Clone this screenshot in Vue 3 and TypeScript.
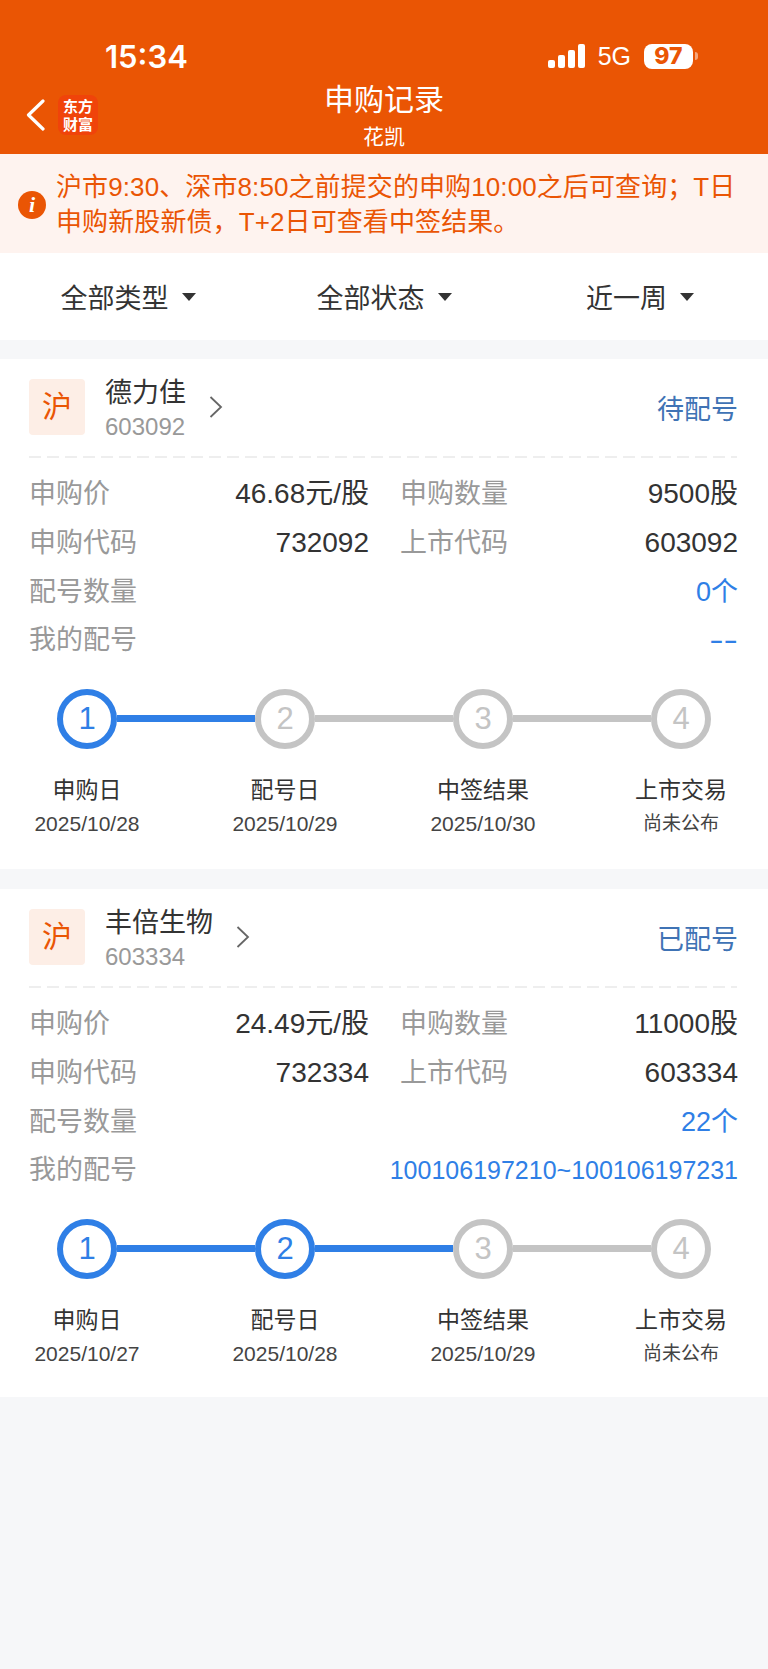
<template>
  <div class="page">
    <header class="header">
      <div class="status">
        <span class="time">15:34</span>
        <div class="status-right">
          <div class="signal"><i class="b1"></i><i class="b2"></i><i class="b3"></i><i class="b4"></i></div>
          <span class="net">5G</span>
          <div class="battery"><span>97</span></div>
          <i class="nub"></i>
        </div>
      </div>
      <div class="nav">
        <div class="nav-left">
          <svg class="back" width="20" height="32" viewBox="0 0 20 32">
            <path d="M17 2 L2.5 16 L17 30" fill="none" stroke="#fff" stroke-width="3.2" stroke-linecap="round" stroke-linejoin="round" />
          </svg>
          <div class="logo"><div>东方</div><div>财富</div></div>
        </div>
        <div class="nav-title">
          <div class="title">申购记录</div>
          <div class="sub">花凯</div>
        </div>
      </div>
    </header>

    <div class="notice">
      <div class="notice-icon">i</div>
      <p>沪市9:30、深市8:50之前提交的申购10:00之后可查询；T日申购新股新债，T+2日可查看中签结果。</p>
    </div>

    <div class="filters">
      <div v-for="f in filters" :key="f" class="filter">{{ f }}<i class="caret"></i></div>
    </div>

    <section v-for="r in records" :key="r.code" class="card">
      <div class="head">
        <div class="badge">沪</div>
        <div class="stock">
          <div class="name">{{ r.name }}</div>
          <div class="code">{{ r.code }}</div>
        </div>
        <svg class="chev" width="16" height="24" viewBox="0 0 16 24">
          <path d="M2.5 2 L13 12 L2.5 22" fill="none" stroke="#666" stroke-width="1.8" />
        </svg>
        <div class="state">{{ r.state }}</div>
      </div>
      <div class="dash"></div>
      <div class="rows">
        <div class="row"><span class="k">申购价</span><span class="v">{{ r.price }}</span></div>
        <div class="row"><span class="k">申购数量</span><span class="v">{{ r.qty }}</span></div>
        <div class="row"><span class="k">申购代码</span><span class="v">{{ r.subCode }}</span></div>
        <div class="row"><span class="k">上市代码</span><span class="v">{{ r.code }}</span></div>
        <div class="row full"><span class="k">配号数量</span><span class="link">{{ r.count }}</span></div>
        <div class="row full">
          <span class="k">我的配号</span>
          <span class="link" :class="r.numbers === '--' ? 'blank' : 'numbers'">{{ r.numbers }}</span>
        </div>
      </div>
      <div class="track">
        <template v-for="n in 4" :key="n">
          <div class="dot" :class="{ on: n <= r.done }">{{ n }}</div>
          <div v-if="n < 4" class="line" :class="{ on: n <= r.done }"></div>
        </template>
      </div>
      <div class="labels">
        <div v-for="(s, i) in steps" :key="s" class="step">
          <div class="step-name">{{ s }}</div>
          <div class="step-date" :class="{ none: i === 3 }">{{ r.dates[i] }}</div>
        </div>
      </div>
    </section>
  </div>
</template>

<script setup lang="ts">
const filters = ['全部类型', '全部状态', '近一周']
const steps = ['申购日', '配号日', '中签结果', '上市交易']

const records = [
  {
    name: '德力佳', code: '603092', state: '待配号', price: '46.68元/股', qty: '9500股',
    subCode: '732092', count: '0个', numbers: '--', done: 1,
    dates: ['2025/10/28', '2025/10/29', '2025/10/30', '尚未公布'],
  },
  {
    name: '丰倍生物', code: '603334', state: '已配号', price: '24.49元/股', qty: '11000股',
    subCode: '732334', count: '22个', numbers: '100106197210~100106197231', done: 2,
    dates: ['2025/10/27', '2025/10/28', '2025/10/29', '尚未公布'],
  },
]
</script>

<style>
html, body { margin: 0; background: #f6f7f9; }
</style>

<style scoped>
.page {
  min-height: 1669px;
  background: #f6f7f9;
  font-family: "Liberation Sans", "Noto Sans CJK SC", sans-serif;
  color: #333;
}

.header { height: 154px; background: #ea5504; color: #fff; }
.status {
  height: 48px;
  padding: 32px 70px 0 105px;
  display: flex;
  align-items: center;
  justify-content: space-between;
}
.time { font-family: Inter, sans-serif; font-size: 31px; font-weight: 600; }
.status-right { display: flex; align-items: center; }
.signal { display: flex; align-items: flex-end; gap: 3px; height: 24px; }
.signal i { width: 7px; background: #fff; border-radius: 2px; display: block; }
.b1 { height: 8px; }
.b2 { height: 13px; }
.b3 { height: 18px; }
.b4 { height: 24px; }
.net { margin-left: 13px; font-size: 25px; }
.battery {
  margin-left: 13px;
  width: 49px;
  height: 25px;
  background: #fff;
  border-radius: 8px;
  color: #ea5504;
  font-family: Inter, sans-serif;
  font-size: 23px;
  font-weight: 800;
  display: flex;
  align-items: center;
  justify-content: center;
}
.nub { width: 3px; height: 8px; margin-left: 2px; background: #f5a67c; border-radius: 0 3px 3px 0; }

.nav { position: relative; height: 74px; text-align: center; }
.nav-left { position: absolute; left: 26px; top: 15px; display: flex; align-items: center; gap: 12px; }
.back { display: block; }
.logo {
  width: 40px;
  height: 40px;
  background: #f0430a;
  border-radius: 8px;
  color: #fff;
  font-size: 15px;
  line-height: 18px;
  font-weight: 700;
  text-align: center;
  padding-top: 2px;
  box-sizing: border-box;
  font-family: "Noto Sans CJK SC", sans-serif;
}
.title { font-size: 30px; line-height: 40px; }
.sub { font-size: 21px; line-height: 24px; margin-top: 5px; }

.notice {
  height: 99px;
  background: #fef3ef;
  color: #ea5504;
  display: flex;
  align-items: center;
  padding-left: 18px;
  box-sizing: border-box;
}
.notice-icon {
  width: 28px;
  height: 28px;
  flex: none;
  margin-top: 2px;
  border-radius: 50%;
  background: #ea5504;
  color: #fff;
  font: italic 700 22px/28px "Liberation Serif", serif;
  text-align: center;
}
.notice p { margin: 2px 0 0 10px; width: 692px; font-size: 26px; line-height: 35px; letter-spacing: 0.1px; }

.filters {
  height: 87px;
  background: #fff;
  margin-bottom: 19px;
  display: grid;
  grid-template-columns: repeat(3, 1fr);
  align-items: center;
}
.filter { font-size: 27px; color: #333; display: flex; align-items: center; justify-content: center; }
.caret {
  margin-left: 13px;
  border-left: 7px solid transparent;
  border-right: 7px solid transparent;
  border-top: 8px solid #333;
}

.card { background: #fff; height: 510px; margin-bottom: 20px; padding: 14px 30px 0 29px; box-sizing: border-box; }
.card + .card { height: 508px; }
.head { display: flex; align-items: center; height: 68px; }
.badge {
  width: 56px;
  height: 56px;
  border-radius: 4px;
  background: #fdeee6;
  color: #ea5504;
  font-size: 30px;
  line-height: 56px;
  text-align: center;
}
.stock { margin-left: 20px; }
.name { font-size: 27px; line-height: 40px; margin-bottom: -1px; color: #333; }
.code { font-size: 24px; line-height: 30px; color: #999; }
.chev { margin-left: 22px; }
.state { margin-left: auto; font-size: 27px; color: #3f73b5; }
.dash {
  height: 2px;
  margin: 15px 1px 12px 0;
  background: repeating-linear-gradient(90deg, #eeeeee 0 12px, transparent 12px 18px);
}
.rows { display: grid; grid-template-columns: 340px 338px; column-gap: 31px; grid-auto-rows: 48.67px; }
.row { display: flex; align-items: center; justify-content: space-between; font-size: 27px; }
.row span { line-height: 40px; }
.full { grid-column: 1 / 3; }
.k { color: #999; }
.v { color: #333; font-size: 28px; }
.link { color: #2f7fe6; }
.numbers { font-size: 25px; }
.blank { display: inline-block; transform: scaleX(1.6); transform-origin: right center; }

.track { display: flex; align-items: center; margin: 24px 0 0 28px; width: 654px; }
.dot {
  width: 60px;
  height: 60px;
  flex: none;
  box-sizing: border-box;
  border: 6px solid #c4c4c4;
  border-radius: 50%;
  color: #c4c4c4;
  font-size: 31px;
  line-height: 48px;
  text-align: center;
}
.dot.on { border-color: #2f7fe6; color: #2f7fe6; }
.line { flex: 1; height: 7px; background: #c4c4c4; }
.line.on { background: #2f7fe6; }

.labels {
  display: grid;
  grid-template-columns: repeat(4, 150px);
  column-gap: 48px;
  margin: 25px 0 0 -17px;
  text-align: center;
}
.step-name { font-size: 23px; line-height: 32px; color: #333; }
.step-date { font-size: 21px; line-height: 28px; margin-top: 4px; color: #444; }
.step-date.none { font-size: 19px; }
</style>
